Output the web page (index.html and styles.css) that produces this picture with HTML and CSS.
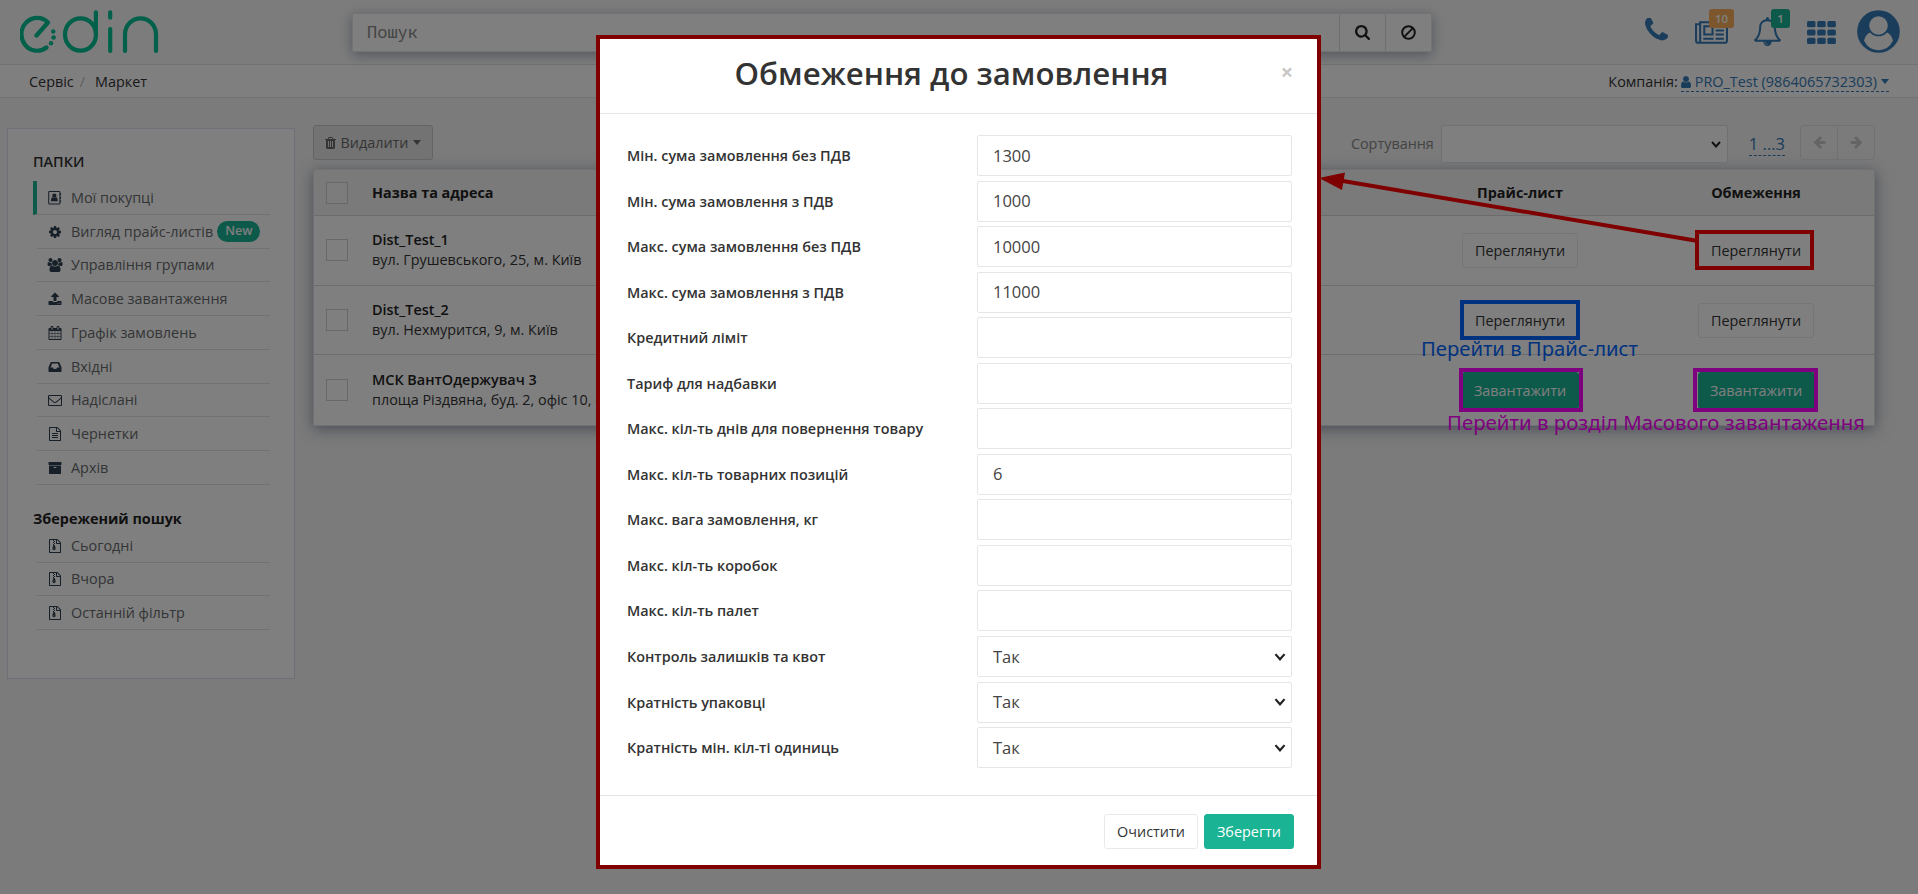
FILE: index.html
```html
<!DOCTYPE html>
<html lang="uk">
<head>
<meta charset="utf-8">
<title>EDIN Маркет</title>
<link rel="stylesheet" href="styles.css">
</head>
<body>
<svg class="sprite" aria-hidden="true">
  <symbol id="phone" viewBox="192 256 1408 1408"><path d="M1600 1240q0 27-10 70.500t-21 68.500q-21 50-122 106-94 51-186 51-27 0-53-3.500t-57.500-12.500-47-14.500-55.500-20.500-49-18q-98-35-175-83-127-79-264-216t-216-264q-48-77-83-175-3-9-18-49t-20.500-55.500-14.500-47-12.500-57.500-3.500-53q0-92 51-186 56-101 106-122 25-11 68.500-21t70.500-10q14 0 21 3 18 6 53 76 11 19 30 54t35 63.500 31 53.500q3 4 17.500 25t21.500 35.500 7 28.500q0 20-28.500 50t-62 55-62 53-28.500 46q0 9 5 22.500t8.500 20.500 14 24 11.500 19q76 137 174 235t235 174q2 1 19 11.500t24 14 20.500 8.500 22.500 5q18 0 46-28.500t53-62 55-62 50-28.500q14 0 28.500 7t35.500 21.500 25 17.500q25 15 53.500 31t63.500 35 54 30q70 35 76 53 3 7 3 21z"/></symbol>
  <symbol id="news" viewBox="0 128 2048 1408"><path d="M1024 512h-384v384h384v-384zm128 640v128h-640v-128h640zm0-768v640h-640v-640h640zm640 768v128h-512v-128h512zm0-256v128h-512v-128h512zm0-256v128h-512v-128h512zm0-256v128h-512v-128h512zm-1536 960v-960h-128v960q0 26 19 45t45 19 45-19 19-45zm1664 0v-1088h-1536v1088q0 33-11 64h1483q26 0 45-19t19-45zm128-1216v1216q0 80-56 136t-136 56h-1664q-80 0-136-56t-56-136v-1088h256v-128h1792z"/></symbol>
  <symbol id="bell" viewBox="64 0 1664 1792"><path d="M912 1696q0-16-16-16-59 0-101.500-42.500t-42.500-101.500q0-16-16-16t-16 16q0 73 51.500 124.500t124.500 51.500q16 0 16-16zm-666-288h1300q-266-300-266-832 0-51-24-105t-69-103-121.500-80.500-169.500-31.500-169.500 31.500-121.500 80.500-69 103-24 105q0 532-266 832zm1482 0q0 52-38 90t-90 38h-448q0 106-75 181t-181 75-181-75-75-181h-448q-52 0-90-38t-38-90q50-42 91-88t85-119.500 74.500-158.500 50-206 19.500-260q0-152 117-282.500t307-158.500q-8-19-8-39 0-40 28-68t68-28 68 28 28 68q0 20-8 39 190 28 307 158.500t117 282.500q0 139 19.500 260t50 206 74.500 158.500 85 119.500 91 88z"/></symbol>
  <symbol id="th" viewBox="0 0 29 23"><g><rect width="8.500" height="6.200" rx="1.500"/><rect x="10.200" width="8.500" height="6.200" rx="1.500"/><rect x="20.400" width="8.500" height="6.200" rx="1.500"/><rect y="8.400" width="8.500" height="6.200" rx="1.500"/><rect x="10.200" y="8.400" width="8.500" height="6.200" rx="1.500"/><rect x="20.400" y="8.400" width="8.500" height="6.200" rx="1.500"/><rect y="16.800" width="8.500" height="6.200" rx="1.500"/><rect x="10.200" y="16.800" width="8.500" height="6.200" rx="1.500"/><rect x="20.400" y="16.800" width="8.500" height="6.200" rx="1.500"/></g></symbol>
  <symbol id="cog" viewBox="0 0 1792 1792"><path d="M1152 896q0-106-75-181t-181-75-181 75-75 181 75 181 181 75 181-75 75-181zm512-109v222q0 12-8 23t-20 13l-185 28q-19 54-39 91 35 50 107 138 10 12 10 25t-9 23q-27 37-99 108t-94 71q-12 0-26-9l-138-108q-44 23-91 38-16 136-29 186-7 28-36 28h-222q-14 0-24.500-8.500t-11.500-21.500l-28-184q-49-16-90-37l-141 107q-10 9-25 9-14 0-25-11-126-114-165-168-7-10-7-23 0-12 8-23 15-21 51-66.500t54-70.500q-27-50-41-99l-183-27q-13-2-21-12.500t-8-23.500v-222q0-12 8-23t19-13l186-28q14-46 39-92-40-57-107-138-10-12-10-24 0-10 9-23 26-36 98.500-107.500t94.500-71.500q13 0 26 10l138 107q44-23 91-38 16-136 29-186 7-28 36-28h222q14 0 24.500 8.500t11.500 21.500l28 184q49 16 90 37l142-107q9-9 24-9 13 0 25 10 129 119 165 170 7 8 7 22 0 12-8 23-15 21-51 66.500t-54 70.500q26 50 41 98l183 28q13 2 21 12.500t8 23.500z"/></symbol>
  <symbol id="users" viewBox="0 0 2048 1792"><path d="M657 896q-162 5-265 128h-134q-82 0-138-40.500t-56-118.500q0-353 124-353 6 0 43.500 21t97.500 42.500 119 21.500q67 0 133-23-5 37-5 66 0 159 93 290zm1071 637q0 120-73 189.500t-194 69.500h-874q-121 0-194-69.500t-73-189.500q0-53 3.500-103.500t14-109 26.500-108.500 43-97.500 62-81 85.500-53.500 111.500-20q10 0 43 21.500t73 48 107 48 135 21.500 135-21.500 107-48 73-48 43-21.500q61 0 111.500 20t85.500 53.500 62 81 43 97.500 26.500 108.500 14 109 3.500 103.500zm-1024-1277q0 106-75 181t-181 75-181-75-75-181 75-181 181-75 181 75 75 181zm704 384q0 159-112.500 271.500t-271.500 112.500-271.500-112.500-112.500-271.500 112.500-271.500 271.500-112.500 271.500 112.500 112.500 271.500zm576 225q0 78-56 118.500t-138 40.500h-134q-103-123-265-128 93-131 93-290 0-29-5-66 66 23 133 23 59 0 119-21.500t97.500-42.500 43.500-21q124 0 124 353zm-128-609q0 106-75 181t-181 75-181-75-75-181 75-181 181-75 181 75 75 181z"/></symbol>
  <symbol id="upload" viewBox="0 0 1792 1792"><path d="M1344 1472q0-26-19-45t-45-19-45 19-19 45 19 45 45 19 45-19 19-45zm256 0q0-26-19-45t-45-19-45 19-19 45 19 45 45 19 45-19 19-45zm128-224v320q0 40-28 68t-68 28h-1472q-40 0-68-28t-28-68v-320q0-40 28-68t68-28h427q21 56 70.500 92t110.500 36h256q61 0 110.500-36t70.500-92h427q40 0 68 28t28 68zm-325-648q-17 40-59 40h-256v448q0 26-19 45t-45 19h-256q-26 0-45-19t-19-45v-448h-256q-42 0-59-40-17-39 14-69l448-448q18-19 45-19t45 19l448 448q31 30 14 69z"/></symbol>
  <symbol id="calendar" viewBox="0 0 1792 1792"><path d="M192 1664h288v-288h-288v288zm352 0h320v-288h-320v288zm-352-352h288v-320h-288v320zm352 0h320v-320h-320v320zm-352-384h288v-288h-288v288zm736 736h320v-288h-320v288zm-384-736h320v-288h-320v288zm768 736h288v-288h-288v288zm-384-352h320v-320h-320v320zm-352-864v-288q0-13-9.500-22.500t-22.500-9.500h-64q-13 0-22.500 9.500t-9.500 22.500v288q0 13 9.500 22.500t22.500 9.500h64q13 0 22.500-9.500t9.500-22.500zm736 864h288v-320h-288v320zm-384-384h320v-288h-320v288zm384 0h288v-288h-288v288zm32-480v-288q0-13-9.500-22.500t-22.500-9.500h-64q-13 0-22.500 9.500t-9.500 22.500v288q0 13 9.500 22.500t22.500 9.500h64q13 0 22.500-9.500t9.500-22.500zm384-64v1280q0 52-38 90t-90 38h-1408q-52 0-90-38t-38-90v-1280q0-52 38-90t90-38h128v-96q0-66 47-113t113-47h64q66 0 113 47t47 113v96h384v-96q0-66 47-113t113-47h64q66 0 113 47t47 113v96h128q52 0 90 38t38 90z"/></symbol>
  <symbol id="inbox" viewBox="0 0 1792 1792"><path d="M1151 960h316q-1-3-2.500-8t-2.500-8l-212-496h-708l-212 496q-1 2-2.500 8t-2.500 8h316l95 192h320zm577 30v482q0 26-19 45t-45 19h-1536q-26 0-45-19t-19-45v-482q0-62 25-123l238-552q10-25 36.500-42t52.500-17h960q26 0 52.500 17t36.500 42l238 552q25 61 25 123z"/></symbol>
  <symbol id="envelope" viewBox="0 0 1792 1792"><path d="M1664 1504v-768q-32 36-69 66-268 206-426 338-51 43-83 67t-86.500 48.500-102.500 24.500h-2q-48 0-102.500-24.500t-86.500-48.500-83-67q-158-132-426-338-37-30-69-66v768q0 13 9.500 22.500t22.500 9.500h1472q13 0 22.500-9.500t9.500-22.500zm0-1051v-24.500l-.500-13-3-12.500-5.500-9-9-7.500-14-2.500h-1472q-13 0-22.500 9.500t-9.500 22.500q0 168 147 284 193 152 401 317 6 5 35 29.500t46 37.500 44.500 31.500 50.500 27.500 43 9h2q20 0 43-9t50.500-27.500 44.500-31.500 46-37.500 35-29.500q208-165 401-317 54-43 100.500-115.500t46.500-131.500zm128-37v1088q0 66-47 113t-113 47h-1472q-66 0-113-47t-47-113v-1088q0-66 47-113t113-47h1472q66 0 113 47t47 113z"/></symbol>
  <symbol id="file" viewBox="0 0 1792 1792"><path d="M1596 380q28 28 48 76t20 88v1152q0 40-28 68t-68 28h-1344q-40 0-68-28t-28-68v-1600q0-40 28-68t68-28h896q40 0 88 20t76 48zm-444-244v376h376q-10-29-22-41l-313-313q-12-12-41-22zm384 1528v-1024h-416q-40 0-68-28t-28-68v-416h-768v1536h1280zm-1024-864q0-14 9-23t23-9h704q14 0 23 9t9 23v64q0 14-9 23t-23 9h-704q-14 0-23-9t-9-23v-64zm736 224q14 0 23 9t9 23v64q0 14-9 23t-23 9h-704q-14 0-23-9t-9-23v-64q0-14 9-23t23-9h704zm0 256q14 0 23 9t9 23v64q0 14-9 23t-23 9h-704q-14 0-23-9t-9-23v-64q0-14 9-23t23-9h704z"/></symbol>
  <symbol id="zip" viewBox="0 0 1792 1792"><path d="M1596 380q28 28 48 76t20 88v1152q0 40-28 68t-68 28h-1344q-40 0-68-28t-28-68v-1600q0-40 28-68t68-28h896q40 0 88 20t76 48zm-444-244v376h376q-10-29-22-41l-313-313q-12-12-41-22zm384 1528v-1024h-416q-40 0-68-28t-28-68v-416h-768v1536h1280z"/><path d="M640 128h128v128h-128zM768 256h128v128h-128zM640 384h128v128h-128zM768 512h128v128h-128zM640 640h128v128h-128zM690 768h180l110 420q20 260-210 260t-210-260zM770 1200q-80 0-80 50t80 50 80-50-80-50z" fill-rule="evenodd"/></symbol>
  <symbol id="archive" viewBox="0 0 1792 1792"><path d="M1088 832q0-26-19-45t-45-19h-256q-26 0-45 19t-19 45 19 45 45 19h256q26 0 45-19t19-45zm576-192v960q0 26-19 45t-45 19h-1408q-26 0-45-19t-19-45v-960q0-26 19-45t45-19h1408q26 0 45 19t19 45zm64-448v256q0 26-19 45t-45 19h-1536q-26 0-45-19t-19-45v-256q0-26 19-45t45-19h1536q26 0 45 19t19 45z"/></symbol>
  <symbol id="book" viewBox="0 0 15 15"><path d="M1.500 0h10.500a1.300 1.300 0 0 1 1.300 1.300v1.200h.7v2h-.7v1.800h.7v2h-.7v1.800h.7v2h-.7v1a1.300 1.300 0 0 1-1.300 1.300H1.500A1.300 1.300 0 0 1 .2 13.100V1.300A1.300 1.300 0 0 1 1.500 0zM1.300 1.100v12.200h10.900V1.100z" fill-rule="evenodd"/><circle cx="6.800" cy="5" r="2.300"/><path d="M3.200 11q0-4.100 1.800-4.300 1.800 1.300 3.600 0 1.800.2 1.800 4.300z"/></symbol>
  <symbol id="trash" viewBox="192 128 1408 1536"><path d="M704 1376v-704q0-14-9-23t-23-9h-64q-14 0-23 9t-9 23v704q0 14 9 23t23 9h64q14 0 23-9t9-23zm256 0v-704q0-14-9-23t-23-9h-64q-14 0-23 9t-9 23v704q0 14 9 23t23 9h64q14 0 23-9t9-23zm256 0v-704q0-14-9-23t-23-9h-64q-14 0-23 9t-9 23v704q0 14 9 23t23 9h64q14 0 23-9t9-23zm-544-992h448l-48-117q-7-9-17-11h-317q-10 2-17 11zm928 32v64q0 14-9 23t-23 9h-96v948q0 83-47 143.500t-113 60.500h-832q-66 0-113-58.500t-47-141.500v-952h-96q-14 0-23-9t-9-23v-64q0-14 9-23t23-9h309l70-167q15-37 54-63t79-26h320q40 0 79 26t54 63l70 167h309q14 0 23 9t9 23z"/></symbol>
  <symbol id="search" viewBox="64 128 1664 1664"><path d="M1216 832q0-185-131.500-316.500t-316.500-131.500-316.500 131.500-131.500 316.500 131.500 316.500 316.500 131.500 316.500-131.500 131.500-316.500zm512 832q0 52-38 90t-90 38q-54 0-90-38l-343-342q-179 124-399 124-143 0-273.500-55.500t-225-150-150-225-55.500-273.500 55.500-273.500 150-225 225-150 273.500-55.500 273.500 55.500 225 150 150 225 55.500 273.500q0 220-124 399l343 343q37 37 37 90z"/></symbol>
  <symbol id="ban" viewBox="0 0 15 15"><g fill="none" stroke="currentColor" stroke-width="2"><circle cx="7.500" cy="7.500" r="6.300"/><path d="M11.900 3.100l-8.800 8.800"/></g></symbol>
  <symbol id="user" viewBox="256 128 1280 1536"><path d="M1536 1399q0 109-62.500 187t-150.500 78h-854q-88 0-150.500-78t-62.500-187q0-85 8.500-160.500t31.500-152 58.500-131 94-89 134.500-34.500q131 128 313 128t313-128q76 0 134.500 34.500t94 89 58.500 131 31.500 152 8.500 160.500zm-256-887q0 159-112.500 271.500t-271.500 112.500-271.500-112.500-112.500-271.500 112.500-271.500 271.500-112.500 271.500 112.500 112.500 271.500z"/></symbol>
  <symbol id="left" viewBox="64 128 1664 1664"><path d="M1664 896v128q0 53-32.500 90.500t-84.500 37.500h-704l293 294q38 36 38 90t-38 90l-75 76q-37 37-90 37-52 0-91-37l-651-652q-37-37-37-90 0-52 37-91l651-650q38-38 91-38 52 0 90 38l75 74q38 38 38 91t-38 91l-293 293h704q52 0 84.500 37.500t32.500 90.500z"/></symbol>
  <symbol id="chev" viewBox="0 0 10 7"><path d="M1 1l4 4.500 4-4.500" fill="none" stroke="currentColor" stroke-width="1.900"/></symbol>
</svg>

<div class="page">
  <header class="top">
    <svg class="logo" viewBox="0 0 140 46">
      <path d="M16.500 27.500L28 14.500A15.700 16.400 0 1 0 26.500 39.500"/>
      <g class="dots"><circle cx="33.300" cy="23.500" r="2.200"/><circle cx="33.600" cy="29.500" r="2.300"/><circle cx="31" cy="35.200" r="2.200"/></g>
      <ellipse cx="60.500" cy="26.500" rx="15.500" ry="16.200"/><path d="M75.900 4.300v22"/>
      <path d="M90.200 4.300v5.400M90.200 21v22M105 43V26.500a15.500 16.200 0 0 1 31 0V43"/>
    </svg>
    <div class="search">
      <span class="ph">Пошук</span>
      <span class="sbtn"><svg width="15" height="15"><use href="#search"/></svg></span>
      <span class="sbtn"><svg width="15" height="15"><use href="#ban"/></svg></span>
    </div>
    <nav class="tools">
      <span class="tool t-phone"><svg width="23" height="26"><use href="#phone"/></svg></span>
      <span class="tool t-news"><svg width="33" height="23"><use href="#news"/></svg><b class="badge orange">10</b></span>
      <span class="tool t-bell"><svg width="27" height="29"><use href="#bell"/></svg><b class="badge green">1</b></span>
      <span class="tool t-th"><svg width="29" height="23"><use href="#th"/></svg></span>
      <svg class="avatar" viewBox="0 0 43 43"><circle cx="21.500" cy="21.500" r="21.300"/><g fill="#f9f9f9"><path d="M7 30.500q2-7.500 7.500-8.500 7 6.500 14 0 5.500 1 7.500 8.500-4.500 9.700-14.500 9.700T7 30.500z"/><circle cx="21.500" cy="15.500" r="10.800" fill="#337ab7"/><circle cx="21.500" cy="15.500" r="9.300"/></g></svg>
    </nav>
  </header>
  <div class="crumbs">
    <div><span>Сервіс</span><i>/</i><span>Маркет</span></div>
    <div class="company">Компанія: <span class="link"><svg width="10" height="12"><use href="#user"/></svg> PRO_Test (9864065732303) <em class="caret"></em></span></div>
  </div>
  <div class="body">
    <aside class="side">
      <h4>ПАПКИ</h4>
      <ul>
        <li class="active"><svg><use href="#book"/></svg>Мої покупці</li>
        <li><svg><use href="#cog"/></svg>Вигляд прайс-листів<span class="new">New</span></li>
        <li><svg class="wide"><use href="#users"/></svg>Управління групами</li>
        <li><svg><use href="#upload"/></svg>Масове завантаження</li>
        <li><svg><use href="#calendar"/></svg>Графік замовлень</li>
        <li><svg><use href="#inbox"/></svg>Вхідні</li>
        <li><svg><use href="#envelope"/></svg>Надіслані</li>
        <li><svg><use href="#file"/></svg>Чернетки</li>
        <li><svg><use href="#archive"/></svg>Архів</li>
      </ul>
      <h5>Збережений пошук</h5>
      <ul>
        <li><svg><use href="#zip"/></svg>Сьогодні</li>
        <li><svg><use href="#zip"/></svg>Вчора</li>
        <li><svg><use href="#zip"/></svg>Останній фільтр</li>
      </ul>
    </aside>
    <main class="main">
      <div class="bar">
        <span class="del"><svg width="11" height="12"><use href="#trash"/></svg>Видалити<em class="caret"></em></span>
        <span class="sort">Сортування</span>
        <span class="sel"><svg width="10" height="7"><use href="#chev"/></svg></span>
        <span class="pages">1 ...3</span>
        <span class="pager"><span><svg width="13" height="13"><use href="#left"/></svg></span><span><svg class="flip" width="13" height="13"><use href="#left"/></svg></span></span>
      </div>
      <div class="table">
        <div class="row head"><i class="cb"></i><b>Назва та адреса</b><b class="c">Прайс-лист</b><b class="c">Обмеження</b></div>
        <div class="row"><i class="cb"></i><div><b>Dist_Test_1</b><p>вул. Грушевського, 25, м. Київ</p></div><div class="c"><span class="btn">Переглянути</span></div><div class="c"><span class="btn">Переглянути</span></div></div>
        <div class="row"><i class="cb"></i><div><b>Dist_Test_2</b><p>вул. Нехмурится, 9, м. Київ</p></div><div class="c"><span class="btn">Переглянути</span></div><div class="c"><span class="btn">Переглянути</span></div></div>
        <div class="row"><i class="cb"></i><div><b>МСК ВантОдержувач 3</b><p>площа Різдвяна, буд. 2, офіс 10, с</p></div><div class="c"><span class="btn primary">Завантажити</span></div><div class="c"><span class="btn primary">Завантажити</span></div></div>
      </div>
    </main>
  </div>
  <svg class="notes" viewBox="0 0 1918 894">
    <g fill="none" stroke-width="4">
      <path d="M1698 241L1340 180.500" stroke="#f00"/>
      <rect x="1697" y="232" width="115" height="36" stroke="#f00"/>
      <rect x="1462" y="302" width="116" height="36" stroke="#06f"/>
      <rect x="1461" y="370" width="120" height="40" stroke="#f0f"/>
      <rect x="1695" y="370" width="121" height="40" stroke="#f0f"/>
    </g>
    <path d="M1319 178l26-5.500-3 17.500z" fill="#f00"/>
    <text x="1421" y="356" fill="#06f" textLength="217" lengthAdjust="spacingAndGlyphs">Перейти в Прайс-лист</text>
    <text x="1447" y="430" fill="#f0f" textLength="418" lengthAdjust="spacingAndGlyphs">Перейти в розділ Масового завантаження</text>
  </svg>
</div>

<div class="backdrop">
  <section class="modal">
    <div class="mhead"><h1>Обмеження до замовлення</h1><span class="close">×</span></div>
    <div class="form">
      <label>Мін. сума замовлення без ПДВ</label><span class="in">1300</span>
      <label>Мін. сума замовлення з ПДВ</label><span class="in">1000</span>
      <label>Макс. сума замовлення без ПДВ</label><span class="in">10000</span>
      <label>Макс. сума замовлення з ПДВ</label><span class="in">11000</span>
      <label>Кредитний ліміт</label><span class="in"></span>
      <label>Тариф для надбавки</label><span class="in"></span>
      <label>Макс. кіл-ть днів для повернення товару</label><span class="in"></span>
      <label>Макс. кіл-ть товарних позицій</label><span class="in">6</span>
      <label>Макс. вага замовлення, кг</label><span class="in"></span>
      <label>Макс. кіл-ть коробок</label><span class="in"></span>
      <label>Макс. кіл-ть палет</label><span class="in"></span>
      <label>Контроль залишків та квот</label><span class="in">Так<svg width="12" height="8"><use href="#chev"/></svg></span>
      <label>Кратність упаковці</label><span class="in">Так<svg width="12" height="8"><use href="#chev"/></svg></span>
      <label>Кратність мін. кіл-ті одиниць</label><span class="in">Так<svg width="12" height="8"><use href="#chev"/></svg></span>
    </div>
    <div class="mfoot"><span class="mbtn">Очистити</span><span class="mbtn save">Зберегти</span></div>
  </section>
</div>
</body>
</html>
```

FILE: styles.css
```css
* { box-sizing: border-box; }
body { margin: 0; font: 14.400px/20px "Open Sans", "Noto Sans", sans-serif; color: #333; background: #f6f6f6; overflow: hidden; }
h1, h4, h5, p, ul { margin: 0; padding: 0; }
i, em { font-style: normal; }
svg { fill: currentColor; flex: none; display: block; }
.sprite { display: none; }
.page { position: relative; height: 894px; overflow: hidden; }

.top { height: 65px; display: flex; align-items: flex-start; background: #f9f9f9; border-bottom: 1px solid #e2e4e6; }
.logo { width: 140px; height: 46px; margin: 8px 0 0 20px; fill: none; stroke: #00c093; stroke-width: 4.200px; stroke-linecap: round; stroke-linejoin: round; }
.dots { fill: #00c093; stroke: none; }
.search { display: flex; width: 1080px; height: 39px; margin: 13px 0 0 192px; background: #fff; border: 1px solid #e5e6e7; box-shadow: 0 3px 12px rgba(60, 75, 110, .45); color: #222; }
.ph { flex: 1; padding-left: 14px; font: 17px/36px "Noto Sans Mono", "DejaVu Sans Mono", monospace; color: #8a8a8a; }
.sbtn { width: 46px; display: flex; align-items: center; justify-content: center; border-left: 1px solid #dcdcdc; }
.tools { display: flex; margin-left: 213px; height: 64px; color: #337ab7; }
.tool { position: relative; }
.t-phone { margin-top: 18px; width: 50px; }
.t-news { margin-top: 21px; width: 59px; }
.t-bell { margin-top: 17px; width: 53px; }
.t-th { margin-top: 21px; width: 50px; }
.avatar { width: 43px; height: 43px; margin-top: 10px; }
.badge { position: absolute; height: 19px; border-radius: 3px; font: 600 11.500px/19px "Open Sans", sans-serif; color: #fff; text-align: center; }
.t-news .badge { left: 14px; top: -12px; width: 25px; }
.t-bell .badge { left: 17px; top: -8px; width: 19px; }
.orange { background: #f8ac59; }
.green { background: #1ab394; }

.crumbs { height: 33px; padding: 2px 29px 0; display: flex; justify-content: space-between; align-items: center; background: #fff; border-bottom: 1px solid #e2e4e6; }
.crumbs i { padding: 0 10px 0 6px; color: #bbb; }
.company { display: flex; gap: 3px; }
.link { display: flex; align-items: center; gap: 4px; color: #337ab7; height: 20px; border-bottom: 1px dashed #337ab7; }
.caret { display: inline-block; border: 4px solid transparent; border-top: 5px solid; border-bottom: 0; }

.body { display: flex; align-items: flex-start; }
.side { width: 288px; height: 551px; margin: 30px 18px 0 7px; padding: 23px 24px 0 25px; background: #fff; border: 1px solid #dfdff0; color: #676a6c; }
.side h4 { font-size: 14.400px; font-weight: 600; color: #333; height: 29px; }
.side h5 { font-size: 14.400px; font-weight: 700; color: #222; margin-top: 24px; height: 20px; }
.side ul { list-style: none; }
.side li { height: 33.750px; margin-left: 4px; padding-top: 1px; display: flex; align-items: center; border-bottom: 1px solid #e0e3e5; }
.side li svg { width: 14px; height: 14px; margin: 0 9px 0 11px; color: #2f4050; }
.side li svg.wide { width: 16px; margin: 0 8px 0 10px; }
.side .active { border-left: 4px solid #1ab394; margin-left: 0; }
.new { margin-left: 4px; padding: 0 8px; height: 21px; line-height: 20px; border-radius: 11px; background: #1ab394; color: #fff; font-weight: 600; font-size: 12.500px; }

.main { width: 1562px; margin-top: 27px; }
.bar { display: flex; height: 44px; align-items: flex-start; }
.del { display: flex; align-items: center; justify-content: center; gap: 4px; width: 120px; height: 35px; border: 1px solid #c8c8c8; border-radius: 3px; background: #e6e6e6; color: #6a6a6a; }
.sort { margin-left: auto; margin-top: 9px; color: #888; }
.sel { width: 287px; height: 38px; margin-left: 7px; border: 1px solid #e0e1e3; border-radius: 2px; background: #fff; display: flex; align-items: center; justify-content: flex-end; padding-right: 6px; color: #222; }
.pages { margin: 8px 15px 0 21px; font-size: 16.500px; line-height: 22px; color: #337ab7; border-bottom: 1px dashed; }
.pager { display: flex; width: 75px; height: 35px; border: 1px solid #e2e3e5; border-radius: 3px; color: #c8c8c8; }
.pager span { flex: 1; display: flex; align-items: center; justify-content: center; }
.pager span + span { border-left: 1px solid #e2e3e5; }
.flip { transform: scaleX(-1); }

.table { width: 1562px; border: 1px solid #e2e2e8; background: #fff; box-shadow: 0 3px 14px rgba(60, 75, 110, .55); }
.row { display: grid; grid-template-columns: 58px 1fr 236px 236px; align-items: center; height: 69.700px; border-bottom: 1px solid #d8d8d8; color: #333; }
.row:last-child { border-bottom: 0; }
.row b { color: #222; }
.row div b { font-weight: 600; }
.head { height: 46px; background: #f5f5f6; }
.cb { width: 22px; height: 22px; margin-left: 12px; border: 1px solid #d0d0d0; background: #fff; }
.head .cb { background: #f9f9f9; }
.c { display: flex; justify-content: center; text-align: center; }
.btn { width: 116px; height: 35px; line-height: 34px; border: 1px solid #e7eaec; border-radius: 3px; background: #fff; }
.primary { background: #1ab394; border-color: #1ab394; color: #fff; width: 117px; height: 37px; line-height: 35px; }

.notes { position: absolute; left: 0; top: 0; width: 1918px; height: 894px; }
.notes text { font: 20px "Noto Sans", "Open Sans", sans-serif; }

.backdrop { position: fixed; inset: 0; display: flex; justify-content: center; align-items: flex-start; padding: 35px 1px 0 0; background: rgba(0, 0, 0, .5); }
.modal { width: 725px; height: 834px; border: 4px solid #800000; background: #fff; display: flex; flex-direction: column; }
.mhead { position: relative; height: 75px; border-bottom: 1px solid #e5e5e5; }
.mhead h1 { text-align: center; padding-right: 14px; font-size: 31.200px; font-weight: 600; line-height: 68px; }
.close { position: absolute; right: 24px; top: 23px; font-size: 21.600px; font-weight: 700; color: #c8c8c8; }
.form { flex: 1; display: grid; grid-template-columns: 350px 315px; grid-auto-rows: 45.550px; padding: 21px 0 0 27px; }
.form label { font-weight: 600; line-height: 41px; color: #333; }
.in { height: 41px; border: 1px solid #e5e6e7; border-radius: 2px; padding: 0 5px 0 15px; font-size: 16.500px; display: flex; justify-content: space-between; align-items: center; color: #444; }
.in svg { color: #222; }
.mfoot { height: 70px; border-top: 1px solid #e5e5e5; display: flex; justify-content: flex-end; gap: 6px; padding: 18px 23px 0 0; }
.mbtn { width: 94px; height: 35px; border: 1px solid #e7eaec; border-radius: 3px; text-align: center; line-height: 34px; }
.save { width: 90px; background: #1ab394; border-color: #1ab394; color: #fff; }
```
